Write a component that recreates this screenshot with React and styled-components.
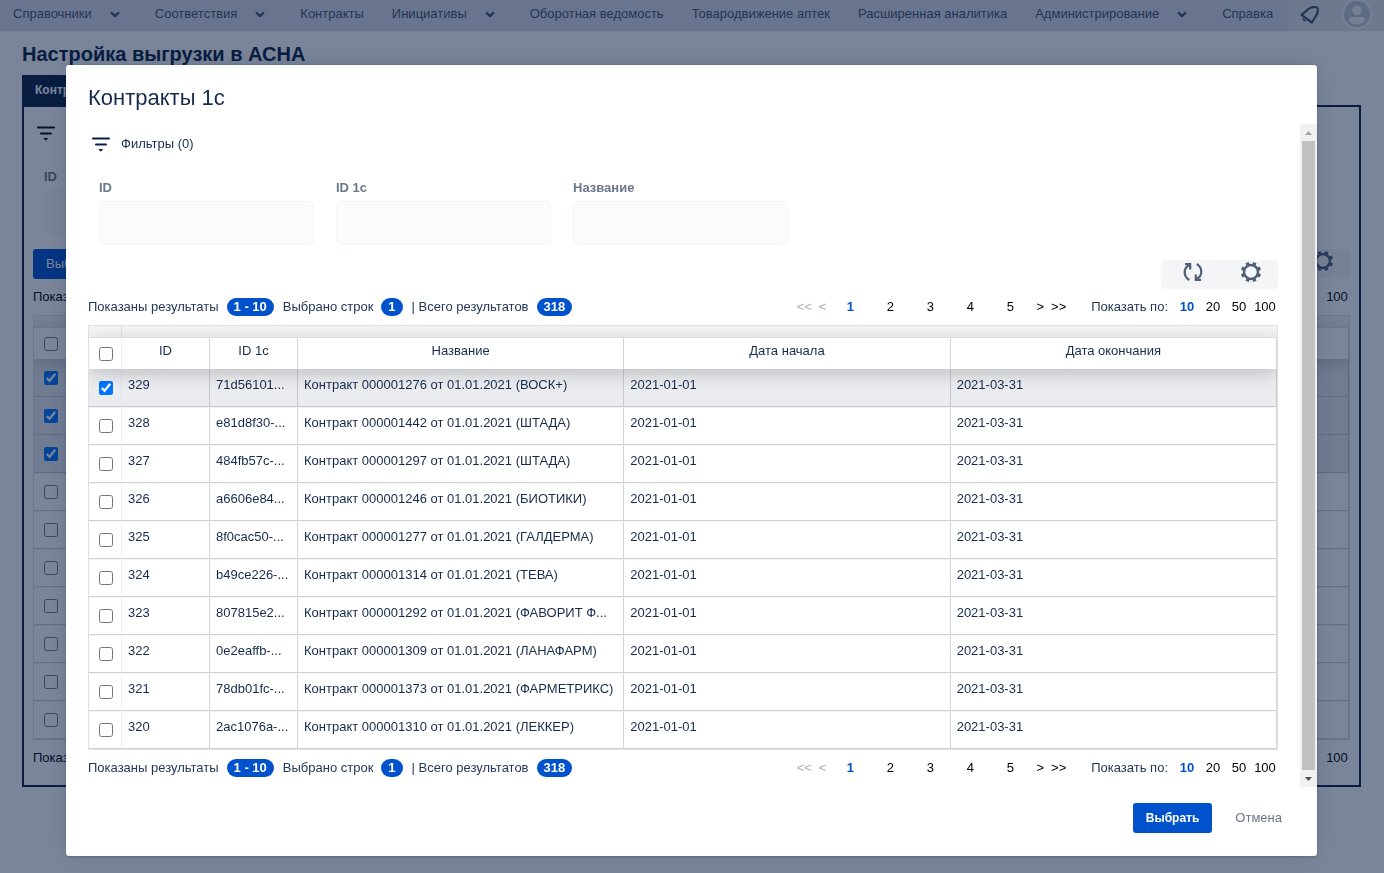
import React from 'react';
import styled, { createGlobalStyle, css } from 'styled-components';

const GlobalStyle = createGlobalStyle`
  *, *::before, *::after { box-sizing: border-box; }
  body {
    margin: 0;
    background: #fff;
    color: #172b4d;
    font: 13px/18px "Liberation Sans", Arial, sans-serif;
  }
  button, input { font: inherit; }
  button { border: 0; padding: 0; background: none; color: inherit; }
`;

const Nav = styled.nav`
  display: flex;
  height: 31px;
  background: #e0e4e6;
  overflow: hidden;
`;
const NavItem = styled.a`
  display: flex;
  align-items: center;
  gap: 11px;
  height: 28px;
  padding: 0 15px 0 13px;
  background: #dadde7;
  box-shadow: 0 3px 0 #d8dbe4;
  color: #42526e;
  text-decoration: none;
  white-space: nowrap;
`;
const NavTools = styled.div`
  display: flex;
  align-items: center;
  gap: 19px;
  height: 28px;
  margin-left: 10px;
`;
const IconButton = styled.button`
  display: flex;
  align-items: center;
  justify-content: center;
  color: ${(p) => p.$color || '#42526e'};
`;

const Page = styled.main`
  padding: 10px 23px 0 22px;
`;
const PageTitle = styled.h1`
  margin: 0;
  font-size: 20px;
  line-height: 26px;
  color: #091e42;
`;
const Tab = styled.button`
  display: block;
  height: 30px;
  margin-top: 8px;
  padding: 0 13px;
  background: #091e42;
  color: #fff;
  font-size: 12px;
  font-weight: 700;
`;
const Panel = styled.section`
  padding: 14px 9px 9px;
  border: 2px solid #091e42;
`;
const PanelBar = styled.div`
  display: flex;
  justify-content: space-between;
  align-items: flex-start;
  margin-top: 15px;
`;

const FilterHead = styled.div`
  display: flex;
  align-items: center;
  gap: 8px;
  height: 24px;
  margin-left: 1px;
`;
const Filters = styled.div`
  display: flex;
  gap: 22px;
  margin: 23px 11px 0;
`;
const Field = styled.label`
  display: flex;
  flex-direction: column;
  gap: 4px;
  width: 215px;
  color: #6b778c;
  font-weight: 700;
`;
const TextInput = styled.input`
  height: 44px;
  width: 100%;
  padding: 0 8px;
  border: 1px solid #f4f5f7;
  border-radius: 5px;
  background: #fafbfc;
`;
const Toolbar = styled.div`
  display: flex;
  align-items: flex-start;
  gap: 34px;
  width: 117px;
  height: 29px;
  margin-left: auto;
  padding: 0 15px 0 20px;
  border-radius: 4px;
  background: #f4f5f7;
`;
const FilterToolbar = styled(Toolbar)`
  margin-top: 15px;
`;
const PrimaryButton = styled.button`
  height: 30px;
  padding: 0 13px;
  border-radius: 3px;
  background: #0052cc;
  color: #fff;
  font-size: ${(p) => (p.$plain ? 13 : 12)}px;
  font-weight: ${(p) => (p.$plain ? 400 : 700)};
`;
const LinkButton = styled.button`
  height: 30px;
  padding: 0 13px;
  color: #6b778c;
`;

const StatsRow = styled.div`
  display: flex;
  align-items: center;
  justify-content: space-between;
  height: 18px;
  margin: 9px 0;
  color: ${(p) => (p.$dark ? '#000' : '#253858')};
  white-space: nowrap;
`;
const Counts = styled.div`
  display: flex;
  align-items: center;
`;
const Pill = styled.span`
  margin: 0 9px 0 8px;
  padding: 0 7px;
  border-radius: 9px;
  background: #0052cc;
  color: #fff;
  font-weight: 700;
`;
const Pager = styled.div`
  display: flex;
  align-items: center;
`;
const PagerButton = styled.button`
  min-width: ${(p) => p.$w || 0}px;
  color: ${(p) => (p.$muted ? '#a5adba' : p.$on ? '#0052cc' : '#000')};
  font-weight: ${(p) => (p.$on ? 700 : 400)};
`;
const Arrows = styled.span`
  display: flex;
  gap: 7px;
  margin: 0 4px 0 6px;
`;
const SizeLabel = styled.span`
  margin: 0 6px 0 21px;
`;

const Grid = styled.div`
  overflow: hidden;
  border: 1px solid #dfe0e1;
`;
const Band = styled.div`
  height: 11px;
  background: #f4f4f4;
  &::before {
    content: '';
    display: block;
    width: 33px;
    height: 11px;
    border-right: 1px solid #e4e4e4;
  }
`;
const Table = styled.table`
  width: 100%;
  table-layout: fixed;
  border-collapse: separate;
  border-spacing: 0;
`;
const Head = styled.thead`
  position: relative;
  z-index: 1;
  box-shadow: 0 4px 18px rgba(0, 0, 0, 0.2);
`;
const cell = css`
  overflow: hidden;
  text-overflow: ellipsis;
  white-space: nowrap;
  border-right: 1px solid #d5d5d5;
  &:first-child { border-right-color: #f0f0f0; padding: 0 0 0 2px; text-align: center; }
`;
const Th = styled.th`
  height: 32px;
  padding: 0 5px 5px;
  border-top: 1px solid #dcdcdc;
  background: #fff;
  font-weight: 400;
  width: ${(p) => (p.$w ? `${p.$w}px` : 'auto')};
  ${cell}
`;
const Td = styled.td`
  height: 38px;
  padding: 0 4px 6px 6px;
  border-top: 1px solid #f3f3f3;
  border-bottom: 1px solid #d2d2d2;
  ${cell}
`;
const Tr = styled.tr`
  background: ${(p) => (p.$on ? '#ebecf0' : '#fff')};
  ${Td} { ${(p) => p.$on && 'border-color: #ebecf0 #c8c9ce #c8c9ce;'} }
  ${Td}:first-child { ${(p) => p.$on && 'border-right-color: #e2e3e7;'} }
`;
const Check = styled.input`
  display: block;
  width: 14px;
  height: 14px;
  margin: 0 auto;
  accent-color: #0075ff;
`;

const Overlay = styled.div`
  position: fixed;
  inset: 0;
  z-index: 10;
  padding: 65px 67px 17px 66px;
  background: rgba(9, 30, 66, 0.54);
`;
const Modal = styled.div`
  display: flex;
  flex-direction: column;
  border-radius: 3px;
  background: #fff;
  box-shadow: 0 0 0 1px rgba(9, 30, 66, 0.08), 0 2px 1px rgba(9, 30, 66, 0.08),
    0 0 20px -6px rgba(9, 30, 66, 0.31);
`;
const ModalTitle = styled.h2`
  margin: 0;
  padding: 19px 22px 12px;
  font-size: 22px;
  line-height: 28px;
  font-weight: 400;
`;
const ModalMain = styled.div`
  display: flex;
`;
const ModalBody = styled.div`
  flex: 1;
  min-width: 0;
  padding: 8px 22px 1px;
`;
const ModalFooter = styled.footer`
  display: flex;
  justify-content: flex-end;
  gap: 10px;
  padding: 16px 22px 23px;
`;
const ScrollTrack = styled.div`
  display: flex;
  flex-direction: column;
  width: 17px;
  background: #f1f1f1;
`;
const ScrollArrow = styled.button`
  display: flex;
  align-items: center;
  justify-content: center;
  height: 17px;
`;
const ScrollThumb = styled.div`
  flex: 1;
  margin: 0 2px;
  background: #c1c1c1;
`;

const Chevron = () => (
  <svg width="24" height="24" viewBox="0 0 24 24" fill="none" stroke="currentColor" strokeWidth="2.400" strokeLinecap="round" strokeLinejoin="round">
    <path d="M8.700 11 12 14.200l3.300-3.200" />
  </svg>
);
const FilterIcon = () => (
  <svg width="24" height="24" viewBox="0 0 24 24" fill="none" stroke="currentColor" strokeWidth="2" strokeLinecap="round">
    <path d="M4 6.500h16M7 12.500h10" />
    <path d="M10.500 17.500h3L12 19z" fill="currentColor" strokeWidth="1" strokeLinejoin="round" />
  </svg>
);
const RefreshIcon = () => (
  <svg width="24" height="24" viewBox="0 0 24 24" fill="none" stroke="#505f79" strokeWidth="2.200">
    <path d="M8.600 5C5.500 6.400 3.700 8.800 3.700 12.300c0 3.200 1.600 6 4.600 7.700M4 4.200H9.200V9.500" />
    <path d="M15.400 19c3.100-1.400 4.900-3.800 4.900-7.300 0-3.200-1.600-6-4.600-7.700M20 19.800H14.800V14.500" />
  </svg>
);
const GearIcon = () => (
  <svg width="24" height="24" viewBox="0 0 24 24" fill="none" stroke="#505f79">
    <circle cx="12" cy="12" r="7" strokeWidth="2.400" />
    {[22.5, 67.5, 112.5, 157.5, 202.5, 247.5, 292.5, 337.5].map((a) => (
      <path key={a} d="M12 5V1.900" strokeWidth="3.400" transform={`rotate(${a} 12 12)`} />
    ))}
  </svg>
);
const NoticeIcon = () => (
  <svg width="24" height="24" viewBox="0 0 24 24" fill="none" stroke="currentColor" strokeWidth="2.200" strokeLinejoin="round">
    <path d="M3.500 12.800 10.500 7C13 5 17.500 4.500 19 5.500c1.400 1.200 1 5.500-.8 8L13.800 20.500z" />
    <path d="M4.500 15.500c-.6 2.300 1.300 4.200 3.800 3.600z" fill="currentColor" stroke="none" />
  </svg>
);
const Avatar = () => (
  <svg width="32" height="32" viewBox="0 0 32 32">
    <circle cx="16" cy="16" r="14.200" fill="#ccd1da" stroke="#f4f5f7" strokeWidth="2" />
    <circle cx="16" cy="16" r="12.800" fill="#c0c6d4" />
    <circle cx="16" cy="12.500" r="4.800" fill="#f4f5f7" />
    <path d="M8 22.500c0-2.500 1-3.500 3-3.500h10c2 0 3 1 3 3.500 0 1.800-4 4-8 4s-8-2.200-8-4z" fill="#f4f5f7" />
  </svg>
);

const menu = [
  ['Справочники', true], ['Соответствия', true], ['Контракты'], ['Инициативы', true],
  ['Оборотная ведомость'], ['Товародвижение аптек'], ['Расширенная аналитика'],
  ['Администрирование', true], ['Справка'],
];
const contracts = [
  ['329', '71d56101...', '000001276', 'ВОСК+)'],
  ['328', 'e81d8f30-...', '000001442', 'ШТАДА)'],
  ['327', '484fb57c-...', '000001297', 'ШТАДА)'],
  ['326', 'a6606e84...', '000001246', 'БИОТИКИ)'],
  ['325', '8f0cac50-...', '000001277', 'ГАЛДЕРМА)'],
  ['324', 'b49ce226-...', '000001314', 'ТЕВА)'],
  ['323', '807815e2...', '000001292', 'ФАВОРИТ Ф...'],
  ['322', '0e2eaffb-...', '000001309', 'ЛАНАФАРМ)'],
  ['321', '78db01fc-...', '000001373', 'ФАРМЕТРИКС)'],
  ['320', '2ac1076a-...', '000001310', 'ЛЕККЕР)'],
];
const pageRows = [true, true, true, false, false, false, false, false, false, false];

function Stats() {
  return (
    <StatsRow>
      <Counts>
        Показаны результаты<Pill>1 - 10</Pill>Выбрано строк<Pill>1</Pill>| Всего результатов<Pill>318</Pill>
      </Counts>
      <Pager>
        <Arrows><PagerButton $muted>&lt;&lt;</PagerButton><PagerButton $muted>&lt;</PagerButton></Arrows>
        {[1, 2, 3, 4, 5].map((n) => <PagerButton key={n} $w={40} $on={n === 1}>{n}</PagerButton>)}
        <Arrows><PagerButton>&gt;</PagerButton><PagerButton>&gt;&gt;</PagerButton></Arrows>
        <SizeLabel>Показать по:</SizeLabel>
        {[10, 20, 50, 100].map((n) => <PagerButton key={n} $w={26} $on={n === 10}>{n}</PagerButton>)}
      </Pager>
    </StatsRow>
  );
}

function PageStats() {
  return (
    <StatsRow $dark>
      <span>Показаны результаты</span>
      <PagerButton $w={26}>100</PagerButton>
    </StatsRow>
  );
}

export default function App() {
  return (
    <>
      <GlobalStyle />
      <Nav>
        {menu.map(([label, drop]) => (
          <NavItem key={label} href="#">{label}{drop && <Chevron />}</NavItem>
        ))}
        <NavTools>
          <IconButton aria-label="Уведомления"><NoticeIcon /></IconButton>
          <IconButton aria-label="Профиль"><Avatar /></IconButton>
        </NavTools>
      </Nav>
      <Page>
        <PageTitle>Настройка выгрузки в АСНА</PageTitle>
        <Tab>Контракты</Tab>
        <Panel>
          <FilterHead><IconButton $color="#000" aria-label="Фильтры"><FilterIcon /></IconButton></FilterHead>
          <Filters><Field>ID<TextInput /></Field></Filters>
          <PanelBar>
            <PrimaryButton $plain>Выбрать</PrimaryButton>
            <Toolbar>
              <IconButton aria-label="Обновить"><RefreshIcon /></IconButton>
              <IconButton aria-label="Настройки"><GearIcon /></IconButton>
            </Toolbar>
          </PanelBar>
          <PageStats />
          <Grid>
            <Band />
            <Table>
              <Head><tr><Th $w={33}><Check type="checkbox" aria-label="Все строки" /></Th><Th /></tr></Head>
              <tbody>
                {pageRows.map((on, i) => (
                  <Tr key={i} $on={on}>
                    <Td><Check type="checkbox" defaultChecked={on} aria-label="Строка" /></Td><Td />
                  </Tr>
                ))}
              </tbody>
            </Table>
          </Grid>
          <PageStats />
        </Panel>
      </Page>

      <Overlay>
        <Modal role="dialog" aria-labelledby="dialog-title">
          <ModalTitle id="dialog-title">Контракты 1с</ModalTitle>
          <ModalMain>
            <ModalBody>
              <FilterHead>
                <IconButton $color="#091e42" aria-label="Фильтры"><FilterIcon /></IconButton>Фильтры (0)
              </FilterHead>
              <Filters>
                {['ID', 'ID 1с', 'Название'].map((f) => <Field key={f}>{f}<TextInput /></Field>)}
              </Filters>
              <FilterToolbar>
                <IconButton aria-label="Обновить"><RefreshIcon /></IconButton>
                <IconButton aria-label="Настройки"><GearIcon /></IconButton>
              </FilterToolbar>
              <Stats />
              <Grid>
                <Band />
                <Table>
                  <Head>
                    <tr>
                      <Th $w={33}><Check type="checkbox" aria-label="Все строки" /></Th>
                      <Th $w={88}>ID</Th>
                      <Th $w={88}>ID 1с</Th>
                      <Th>Название</Th>
                      <Th>Дата начала</Th>
                      <Th>Дата окончания</Th>
                    </tr>
                  </Head>
                  <tbody>
                    {contracts.map(([id, guid, number, firm], i) => (
                      <Tr key={id} $on={i === 0}>
                        <Td><Check type="checkbox" defaultChecked={i === 0} aria-label={id} /></Td>
                        <Td>{id}</Td>
                        <Td>{guid}</Td>
                        <Td>Контракт {number} от 01.01.2021 ({firm}</Td>
                        <Td>2021-01-01</Td>
                        <Td>2021-03-31</Td>
                      </Tr>
                    ))}
                  </tbody>
                </Table>
              </Grid>
              <Stats />
            </ModalBody>
            <ScrollTrack>
              <ScrollArrow aria-label="Вверх">
                <svg width="7" height="4" viewBox="0 0 7 4"><path d="M0 4 3.500 0 7 4z" fill="#a3a3a3" /></svg>
              </ScrollArrow>
              <ScrollThumb />
              <ScrollArrow aria-label="Вниз">
                <svg width="7" height="4" viewBox="0 0 7 4"><path d="M0 0 3.500 4 7 0z" fill="#505050" /></svg>
              </ScrollArrow>
            </ScrollTrack>
          </ModalMain>
          <ModalFooter>
            <PrimaryButton>Выбрать</PrimaryButton>
            <LinkButton>Отмена</LinkButton>
          </ModalFooter>
        </Modal>
      </Overlay>
    </>
  );
}
